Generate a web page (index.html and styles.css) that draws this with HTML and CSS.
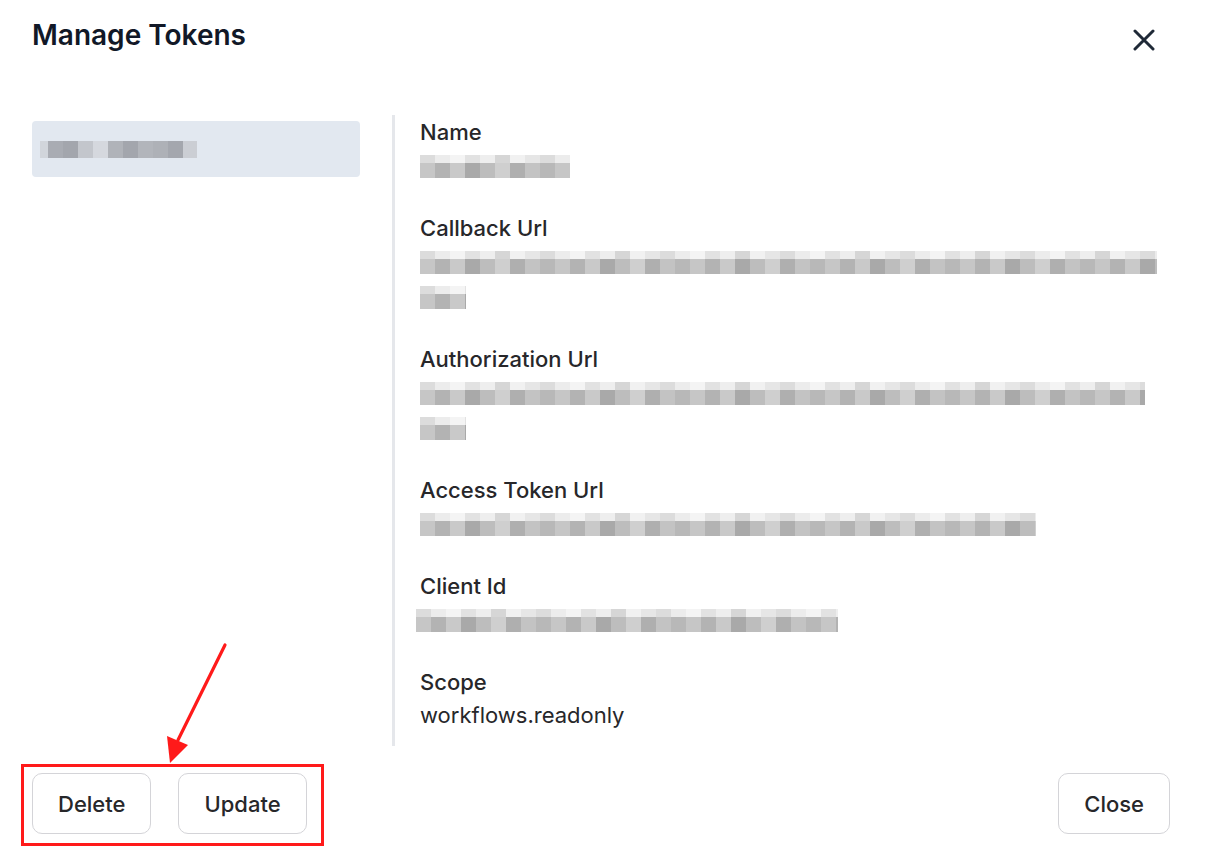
FILE: index.html
```html
<!DOCTYPE html>
<html lang="en">
<head>
<meta charset="utf-8">
<title>Manage Tokens</title>
<link rel="stylesheet" href="styles.css">
</head>
<body>
<div class="modal">
  <header class="modal-header">
    <h1 class="modal-title">Manage Tokens</h1>
    <button class="icon-close" aria-label="Close">
      <svg width="22" height="22" viewBox="0 0 22 22"><path d="M2 2 L20 20 M20 2 L2 20" stroke="#1f2937" stroke-width="3" stroke-linecap="round" fill="none"/></svg>
    </button>
  </header>
  <div class="modal-body">
    <aside class="token-list">
      <div class="token-item"><span class="blur blur-item"></span></div>
    </aside>
    <section class="token-detail">
      <div class="field">
        <div class="field-label">Name</div>
        <div class="field-value"><span class="blur w-name"></span></div>
      </div>
      <div class="field">
        <div class="field-label">Callback Url</div>
        <div class="field-value"><span class="blur w-cb1"></span></div>
        <div class="field-value"><span class="blur w-short"></span></div>
      </div>
      <div class="field">
        <div class="field-label">Authorization Url</div>
        <div class="field-value"><span class="blur w-auth1"></span></div>
        <div class="field-value"><span class="blur w-short"></span></div>
      </div>
      <div class="field">
        <div class="field-label">Access Token Url</div>
        <div class="field-value"><span class="blur w-access"></span></div>
      </div>
      <div class="field">
        <div class="field-label">Client Id</div>
        <div class="field-value"><span class="blur w-client"></span></div>
      </div>
      <div class="field">
        <div class="field-label">Scope</div>
        <div class="field-value text">workflows.readonly</div>
      </div>
    </section>
  </div>
  <footer class="modal-footer">
    <div class="footer-left">
      <button class="btn">Delete</button>
      <button class="btn">Update</button>
    </div>
    <button class="btn">Close</button>
  </footer>
  <div class="annot-box"></div>
  <svg class="annot-arrow" width="80" height="130" viewBox="0 0 80 130">
    <line x1="75" y1="5" x2="28" y2="100" stroke="#ff1a1a" stroke-width="3.2" stroke-linecap="round"/>
    <polygon points="20,123 17,96 38,105" fill="#ff1a1a"/>
  </svg>
</div>
</body>
</html>
```
FILE: styles.css
```css
* { box-sizing: border-box; }
html, body { margin: 0; padding: 0; background: #fff; }
body {
  font-family: Inter, "Noto Sans", "Liberation Sans", sans-serif;
  color: #27272a;
}
.modal {
  position: relative;
  width: 1205px;
  height: 853px;
  padding: 0 35px 0 32px;
}
.modal-header {
  height: 115px;
  display: flex;
  justify-content: space-between;
  align-items: flex-start;
}
.modal-title {
  margin: 18px 0 0 0;
  font-size: 28px;
  line-height: 34px;
  font-weight: 600;
  color: #111827;
}
.icon-close {
  margin: 29px 15px 0 0;
  padding: 0;
  border: 0;
  background: none;
  width: 22px;
  height: 22px;
  display: flex;
}
.modal-body {
  display: flex;
  height: 631px;
}
.token-list {
  width: 328px;
  margin-right: 32px;
  padding-top: 6px;
}
.token-item {
  height: 56px;
  background: #e2e8f0;
  border-radius: 4px;
  display: flex;
  align-items: center;
  padding-left: 8px;
}
.token-detail {
  flex: 1;
  border-left: 3px solid #e5e7eb;
  padding-left: 25px;
  padding-top: 2px;
}
.field { margin-bottom: 31px; }
.field-label {
  font-size: 22px;
  line-height: 30px;
  font-weight: 500;
  color: #27272a;
}
.field-value {
  height: 35px;
  padding-top: 8px;
}
.field-value.text {
  padding-top: 0;
  font-size: 22px;
  line-height: 36px;
  font-weight: 400;
  color: #27272a;
}
.blur {
  display: block;
  height: 23px;
  background-image:
    linear-gradient(90deg, #dcdcdc 0 15px, #ececec 15px 30px, #f4f4f4 30px 45px, #e2e2e2 45px 60px, #eeeeee 60px 75px, #d6d6d6 75px 90px, #f1f1f1 90px 105px, #e6e6e6 105px 120px),
    linear-gradient(90deg, #c6c6c6 0 15px, #b3b3b3 15px 30px, #c9c9c9 30px 45px, #a9a9a9 45px 60px, #bdbdbd 60px 75px, #cfcfcf 75px 90px, #afafaf 90px 105px, #c3c3c3 105px 120px, #b8b8b8 120px 135px);
  background-size: 120px 8px, 135px 15px;
  background-position: 0 0, 0 8px;
  background-repeat: repeat-x;
}
.blur-item {
  width: 157px;
  height: 17px;
  background-image:
    linear-gradient(90deg, #d1d5db 0 8px, #a9acb3 8px 23px, #a3a6ad 23px 38px, #c3c6cc 38px 53px, #d5d8de 53px 68px, #b0b3b9 68px 83px, #a3a6ad 83px 98px, #b2b5bb 98px 113px, #aeb1b7 113px 128px, #a4a7ae 128px 143px, #cbced4 143px 157px);
  background-size: 157px 17px;
  background-position: 0 0;
  background-repeat: no-repeat;
}
.w-name { width: 150px; }
.w-cb1 { width: 737px; }
.w-auth1 { width: 725px; }
.w-short { width: 46px; }
.w-access { width: 616px; }
.w-client { width: 422px; margin-left: -4px; }
.modal-footer {
  margin-top: 27px;
  display: flex;
  justify-content: space-between;
}
.footer-left { display: flex; gap: 27px; }
.btn {
  height: 61px;
  padding: 0 25px;
  border: 1.5px solid #d4d4d8;
  border-radius: 10px;
  background: #fff;
  font-family: inherit;
  font-size: 22px;
  font-weight: 500;
  color: #27272a;
}
.annot-box {
  position: absolute;
  left: 21px;
  top: 764px;
  width: 303px;
  height: 82px;
  border: 3px solid #ff1a1a;
}
.annot-arrow {
  position: absolute;
  left: 150px;
  top: 640px;
}
```
